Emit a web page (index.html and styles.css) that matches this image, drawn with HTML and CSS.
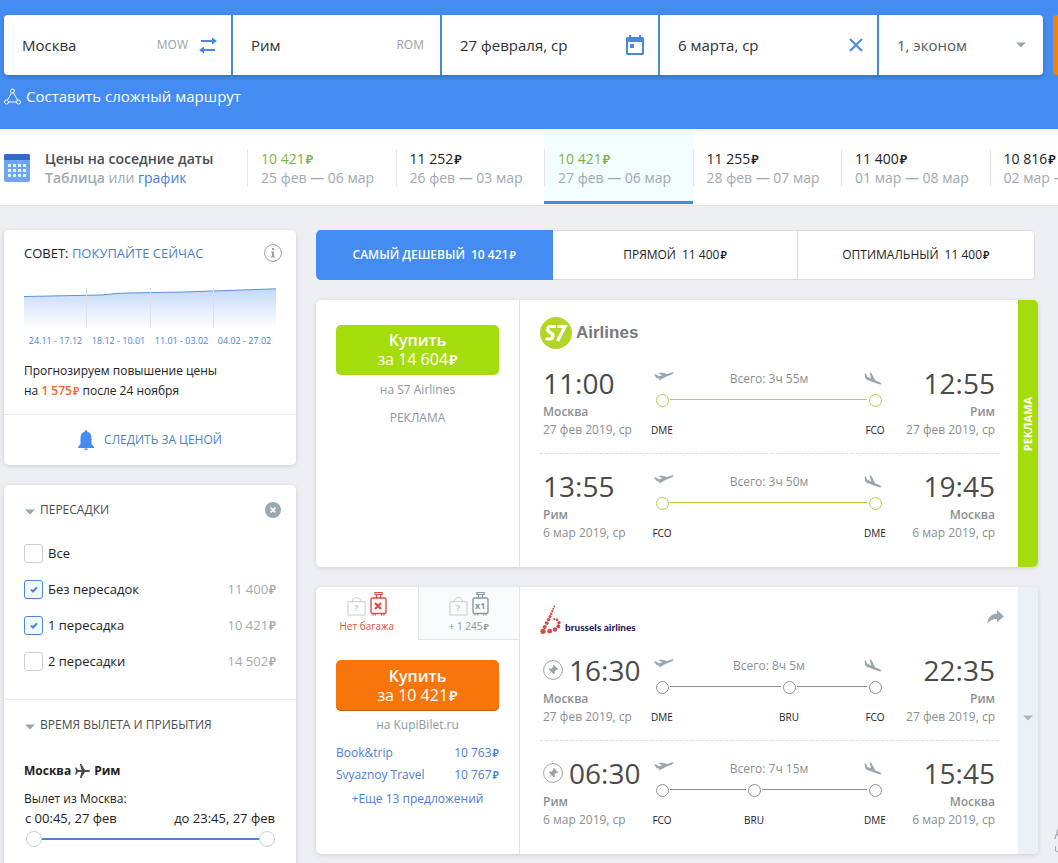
FILE: index.html
```html
<!DOCTYPE html>
<html lang="ru">
<head>
<meta charset="utf-8">
<title>Москва — Рим: авиабилеты</title>
<meta name="viewport" content="width=device-width, initial-scale=1">
<link rel="stylesheet" href="styles.css">
</head>
<body>
<svg class="sprite" aria-hidden="true">
  <symbol id="takeoff" viewBox="0 0 20 12"><path d="M0 4.500 2 4.300 4.600 6.200 8.400 5.300 4.500 3.300 7 2.600 13.500 4.100 17.300 2.600C19.200 2 20 2.600 19.300 3.400 18.500 4.300 14 5.800 12.500 6.500L6.500 9.700 4.300 9.900 5.500 8.400 2.800 8.200z"/></symbol>
  <symbol id="landing" viewBox="0 0 18 14"><path d="M.6 1.200 2 1.700 3.200 4.800 7.200 6.600 5.400.2 7.400 1 11.200 8.200 15.600 10.200c1.300.7 1.900 1.400 1.600 1.900-.4.500-1.500.4-2.800 0L4 8.200C2.400 7.600 1.500 7 1.200 5.800z"/></symbol>
  <symbol id="caret" viewBox="0 0 10 6"><path d="M0 .5h10L5 5.500z"/></symbol>
  <symbol id="bag" viewBox="0 0 20 20"><path d="M1 5.500h18v14H1zM5.500 5.500c0-6 9-6 9 0" fill="none" stroke="currentColor"/></symbol>
  <symbol id="suitcase" viewBox="0 0 17 24"><path d="M5 .5h7v2H5zM6.500 2.500v4M10.500 2.500v4M3 21v2.500M5.500 21v2.500M11.500 21v2.500M14 21v2.500" fill="none" stroke="currentColor" stroke-width="1.200"/><rect x="1" y="6" width="15" height="15.500" rx="1.500" fill="none" stroke="currentColor" stroke-width="1.400"/></symbol>
  <symbol id="pin" viewBox="0 0 20 20"><circle cx="10" cy="10" r="9.400" fill="none" stroke="currentColor"/><path d="M10.700 4.800 15.200 9.300 14.300 9.900 13.500 9.600 11.700 11.400 11.600 13.700 10.700 14.200 8.500 12 5 14.900 8 11.500 5.900 9.300 6.400 8.400 8.700 8.400 10.500 6.500 10.100 5.600z"/></symbol>
</svg>

<header class="top">
  <form class="search" onsubmit="return false">
    <div class="fields">
      <label class="field"><input class="field-input" aria-label="Откуда" value="Москва"><span class="code">MOW</span>
        <svg class="swap" viewBox="0 0 18 18"><path d="M2 5h12M4 14h12" stroke="currentColor" stroke-width="2" fill="none"/><path d="M13 1.500 18 5l-5 3.500zM5 10.500 0 14l5 3.500z" fill="currentColor"/></svg></label>
      <label class="field"><input class="field-input" aria-label="Куда" value="Рим"><span class="code">ROM</span></label>
      <label class="field field-date"><input class="field-input" aria-label="Туда" value="27 февраля, ср">
        <svg class="calendar" viewBox="0 0 18 20"><path d="M3 0h2v2h8V0h2v2h1.500Q18 2 18 3.500v15q0 1.500-1.500 1.500h-15Q0 20 0 18.500v-15Q0 2 1.500 2H3zM2 7v11h14V7zM4 9h4v4H4z" fill-rule="evenodd"/></svg></label>
      <label class="field"><input class="field-input" aria-label="Обратно" value="6 марта, ср">
        <svg class="clear" viewBox="0 0 14 14"><path d="M1 1l12 12M13 1 1 13" stroke="currentColor" stroke-width="2"/></svg></label>
      <label class="field"><select class="field-input field-select" aria-label="Пассажиры и класс"><option>1, эконом</option></select>
        <svg class="caret"><use href="#caret"/></svg></label>
    </div>
    <button class="submit" type="submit" aria-label="Найти"></button>
  </form>
  <a class="complex" href="#"><svg class="route" viewBox="0 0 17 17"><g fill="none" stroke="currentColor"><circle cx="8.500" cy="3" r="2"/><circle cx="2.500" cy="14" r="2"/><circle cx="14.500" cy="14" r="2"/><path d="M7.500 5 3.500 12M9.500 5l4 7M4.500 14h8"/></g></svg>Составить сложный маршрут</a>
</header>

<section class="dates">
  <div class="dates-intro">
    <svg class="grid-icon" viewBox="0 0 26 28"><rect width="26" height="28" rx="2" fill="#6fa6f3"/><path d="M0 6V2q0-2 2-2h22q2 0 2 2v4z" fill="#3269cf"/><path d="M4 11.500h18M4 16.500h18M4 21.500h18" stroke="#e6f5ff" stroke-width="3" stroke-dasharray="3 2"/></svg>
    <div><h2 class="dates-title">Цены на соседние даты</h2><p class="dates-sub"><b>Таблица</b> или <a href="#">график</a></p></div>
  </div>
  <div class="dates-list">
    <a class="date" href="#"><span class="price green">10 421<i>₽</i></span><span>25 фев — 06 мар</span></a>
    <a class="date" href="#"><span class="price">11 252<i>₽</i></span><span>26 фев — 03 мар</span></a>
    <a class="date active" href="#"><span class="price green">10 421<i>₽</i></span><span>27 фев — 06 мар</span></a>
    <a class="date" href="#"><span class="price">11 255<i>₽</i></span><span>28 фев — 07 мар</span></a>
    <a class="date" href="#"><span class="price">11 400<i>₽</i></span><span>01 мар — 08 мар</span></a>
    <a class="date" href="#"><span class="price">10 816<i>₽</i></span><span>02 мар — 09 мар</span></a>
  </div>
</section>

<div class="page">
  <aside class="sidebar">
    <section class="card">
      <div class="advice">
        <div class="advice-head"><h3>СОВЕТ: <a href="#">ПОКУПАЙТЕ СЕЙЧАС</a></h3>
          <svg class="info" viewBox="0 0 18 18"><circle cx="9" cy="9" r="8.400" fill="none" stroke="currentColor"/><path d="M8 4h2v2H8zM7 7.500h3V13H8V8.500H7zM7 12.500h4v1H7z"/></svg></div>
        <svg class="chart" viewBox="0 0 252 40" preserveAspectRatio="none"><defs><linearGradient id="fade" x1="0" y1="0" x2="0" y2="1"><stop offset="0" stop-color="#c3d9f8"/><stop offset="1" stop-color="#fff"/></linearGradient></defs><path d="M0 8.500 78 7 Q92 5 105 5L160 4 252 .8V40H0z" fill="url(#fade)"/><path d="M0 8.500 78 7Q92 5 105 5L160 4 252 .8" fill="none" stroke="#5a93dc"/><path d="M62.500 0v40M126.500 0v40M189.500 0v40" stroke="#dcdfe3"/></svg>
        <div class="periods"><span>24.11 - 17.12</span><span>18.12 - 10.01</span><span>11.01 - 03.02</span><span>04.02 - 27.02</span></div>
        <p class="forecast">Прогнозируем повышение цены<br>на <span class="rise">1 575<i>₽</i></span> после 24 ноября</p>
      </div>
      <button class="follow"><svg class="bell" viewBox="0 0 16 20"><path d="M8 0q1.200 0 1.200 1.600Q13.500 3 13.500 8v6L16 17v1H0v-1l2.500-3V8q0-5 4.300-6.400Q6.800 0 8 0zM6 18.500h4q-.5 1.500-2 1.500t-2-1.500z"/></svg>СЛЕДИТЬ ЗА ЦЕНОЙ</button>
    </section>

    <section class="card filters">
      <div class="filter">
        <div class="filter-head"><svg class="caret"><use href="#caret"/></svg><h3>ПЕРЕСАДКИ</h3><button class="reset" aria-label="Сбросить"><svg viewBox="0 0 6 6"><path d="M.5.5l5 5M5.500.5l-5 5" stroke="#fff" stroke-width="1.600"/></svg></button></div>
        <label class="check"><input type="checkbox"><span>Все</span></label>
        <label class="check"><input type="checkbox" checked><span>Без пересадок</span><span class="check-price">11 400<i>₽</i></span></label>
        <label class="check"><input type="checkbox" checked><span>1 пересадка</span><span class="check-price">10 421<i>₽</i></span></label>
        <label class="check"><input type="checkbox"><span>2 пересадки</span><span class="check-price">14 502<i>₽</i></span></label>
      </div>
      <div class="filter filter-time">
        <div class="filter-head"><svg class="caret"><use href="#caret"/></svg><h3>ВРЕМЯ ВЫЛЕТА И ПРИБЫТИЯ</h3></div>
        <p class="direction">Москва <svg class="plane" viewBox="0 0 15 14"><path d="M0 3.500h1.200L3 6h3.500L4.800 0h1.500L10 6h3.500q1.500.2 1.500 1t-1.500 1H10l-3.700 6H4.800L6.500 8H3L1.200 10.500H0L1 7z"/></svg> Рим</p>
        <p class="depart">Вылет из Москва:</p>
        <p class="range-text"><span>с 00:45, 27 фев</span><span>до 23:45, 27 фев</span></p>
        <div class="range"><input type="range" aria-label="Вылет не раньше" value="0"><input type="range" aria-label="Вылет не позже" value="100"></div>
      </div>
    </section>
  </aside>

  <main class="results">
    <nav class="sorts">
      <button class="sort sort-active">САМЫЙ ДЕШЕВЫЙ<span>10 421<i>₽</i></span></button>
      <button class="sort">ПРЯМОЙ<span>11 400<i>₽</i></span></button>
      <button class="sort">ОПТИМАЛЬНЫЙ<span>11 400<i>₽</i></span></button>
    </nav>

    <article class="card ticket ad">
      <div class="offer">
        <div class="offer-body">
          <button class="buy"><b>Купить</b><span>за 14 604<i>₽</i></span></button>
          <p class="seller">на S7 Airlines</p>
          <p class="seller ad-note">РЕКЛАМА</p>
        </div>
      </div>
      <div class="flights">
        <div class="carrier"><svg class="s7" viewBox="0 0 32 32"><circle cx="16" cy="16" r="16" fill="#b1d629"/><path d="M16 9.500H10.500Q7.500 9.500 7.800 12.500 8 14.500 11 16 14 17.500 12.500 20.500 11.800 22 9 22H5.500M17.500 9.500H25L17.500 24" fill="none" stroke="#fff" stroke-width="3.200"/></svg><span class="s7-name">Airlines</span></div>
        <div class="segment">
          <div class="point"><div class="time">11:00</div><b>Москва</b><span>27 фев 2019, ср</span></div>
          <div class="way"><div class="way-top"><svg class="takeoff"><use href="#takeoff"/></svg><span>Всего: 3ч 55м</span><svg class="landing"><use href="#landing"/></svg></div>
            <div class="track"><span class="stop">DME</span><span class="leg"></span><span class="stop">FCO</span></div></div>
          <div class="point arrival"><div class="time">12:55</div><b>Рим</b><span>27 фев 2019, ср</span></div>
        </div>
        <div class="segment">
          <div class="point"><div class="time">13:55</div><b>Рим</b><span>6 мар 2019, ср</span></div>
          <div class="way"><div class="way-top"><svg class="takeoff"><use href="#takeoff"/></svg><span>Всего: 3ч 50м</span><svg class="landing"><use href="#landing"/></svg></div>
            <div class="track"><span class="stop">FCO</span><span class="leg"></span><span class="stop">DME</span></div></div>
          <div class="point arrival"><div class="time">19:45</div><b>Москва</b><span>6 мар 2019, ср</span></div>
        </div>
      </div>
      <div class="edge"><span>РЕКЛАМА</span></div>
    </article>

    <article class="card ticket">
      <div class="offer">
        <div class="bags">
          <button class="bag-tab no-bag"><span class="bag-icons"><span class="bag"><svg><use href="#bag"/></svg><em>?</em></span><span class="suitcase"><svg><use href="#suitcase"/></svg><em><svg class="cross" viewBox="0 0 8 8"><path d="M1 1l6 6M7 1 1 7" stroke="currentColor" stroke-width="2.400"/></svg></em></span></span>Нет багажа</button>
          <button class="bag-tab with-bag"><span class="bag-icons"><span class="bag"><svg><use href="#bag"/></svg><em>?</em></span><span class="suitcase"><svg><use href="#suitcase"/></svg><em>x1</em></span></span><span>+ 1 245<i>₽</i></span></button>
        </div>
        <div class="offer-body">
          <button class="buy"><b>Купить</b><span>за 10 421<i>₽</i></span></button>
          <p class="seller">на KupiBilet.ru</p>
          <a class="agent" href="#"><span>Book&amp;trip</span><span class="agent-price">10 763<i>₽</i></span></a>
          <a class="agent" href="#"><span>Svyaznoy Travel</span><span class="agent-price">10 767<i>₽</i></span></a>
          <a class="more" href="#">+Еще 13 предложений</a>
        </div>
      </div>
      <div class="flights">
        <div class="carrier"><svg class="sn" viewBox="0 0 21 29"><g fill="#d9494b"><circle cx="14.300" cy="1.500" r=".9"/><circle cx="13.300" cy="3.800" r="1"/><circle cx="12.300" cy="6.200" r="1.100"/><circle cx="11.200" cy="8.700" r="1.300"/><circle cx="10" cy="11.500" r="1.500"/><circle cx="8.600" cy="14.600" r="1.700"/><circle cx="6.800" cy="18.100" r="1.900"/><circle cx="4.700" cy="22" r="2.100"/><circle cx="3" cy="26.300" r="2.600"/><circle cx="9.700" cy="26.200" r="2.400"/><circle cx="15" cy="24.500" r="2.200"/><circle cx="18.300" cy="21.200" r="2"/><circle cx="19" cy="17.600" r="1.700"/><circle cx="17" cy="14.800" r="1.400"/><circle cx="14.300" cy="14" r="1.100"/></g></svg><span class="sn-name">brussels airlines</span>
          <button class="share" aria-label="Поделиться"><svg viewBox="0 0 17 14"><path d="M10 0l7 6.500L10 12V9Q4 8.500 0 14 1 4.500 10 3.500z"/></svg></button></div>
        <div class="segment">
          <div class="point"><div class="time"><svg class="pin"><use href="#pin"/></svg>16:30</div><b>Москва</b><span>27 фев 2019, ср</span></div>
          <div class="way"><div class="way-top"><svg class="takeoff"><use href="#takeoff"/></svg><span>Всего: 8ч 5м</span><svg class="landing"><use href="#landing"/></svg></div>
            <div class="track"><span class="stop">DME</span><span class="leg" style="flex-grow:111"></span><span class="stop">BRU</span><span class="leg" style="flex-grow:70"></span><span class="stop">FCO</span></div></div>
          <div class="point arrival"><div class="time">22:35</div><b>Рим</b><span>27 фев 2019, ср</span></div>
        </div>
        <div class="segment">
          <div class="point"><div class="time"><svg class="pin"><use href="#pin"/></svg>06:30</div><b>Рим</b><span>6 мар 2019, ср</span></div>
          <div class="way"><div class="way-top"><svg class="takeoff"><use href="#takeoff"/></svg><span>Всего: 7ч 15м</span><svg class="landing"><use href="#landing"/></svg></div>
            <div class="track"><span class="stop">FCO</span><span class="leg" style="flex-grow:76"></span><span class="stop">BRU</span><span class="leg" style="flex-grow:105"></span><span class="stop">DME</span></div></div>
          <div class="point arrival"><div class="time">15:45</div><b>Москва</b><span>6 мар 2019, ср</span></div>
        </div>
      </div>
      <button class="edge" aria-label="Подробнее"><svg class="caret"><use href="#caret"/></svg></button>
    </article>
  </main>
</div>
<div class="notice"><p class="notice-title">Активация Windows</p><p>Чтобы активировать Windows</p></div>
</body>
</html>
```
FILE: styles.css
```css
* { box-sizing: border-box; }
html, body { height: 100%; }
body {
  margin: 0;
  overflow: hidden;
  background: #eeeff3;
  color: #222;
  font: 12px/18px "Open Sans", "Noto Sans", sans-serif;
}
h2, h3, p { margin: 0; font-size: inherit; font-weight: 400; }
a { color: #4a7fd4; text-decoration: none; }
button { margin: 0; padding: 0; border: 0; background: none; color: inherit; font: inherit; cursor: pointer; }
i { font-style: normal; font-weight: 600; font-size: 90%; line-height: 1; margin-left: 1px; }
svg { display: block; flex: none; fill: currentColor; }
.sprite { position: absolute; width: 0; height: 0; }
.caret { width: 10px; height: 6px; color: #9aa7ae; }

/* search */
.top { height: 129px; padding: 15px 0 0 4px; background: #448cf1; overflow: hidden; }
.search { display: flex; gap: 10px; }
.fields {
  flex: 1;
  display: grid;
  grid-template-columns: 227fr 207fr 216fr 217fr 164fr;
  gap: 2px;
  height: 60px;
  border-radius: 4px;
  overflow: hidden;
  background: #4a88d8;
  box-shadow: 0 2px 4px rgba(0, 0, 0, .2);
}
.field { display: flex; align-items: center; min-width: 0; padding: 0 14px 0 18px; background: #fff; color: #4a88e0; }
.field-input {
  flex: 1;
  width: 0;
  padding: 0;
  border: 0;
  outline: 0;
  background: none;
  color: #2f3133;
  font: 15px/20px "Open Sans", "Noto Sans", sans-serif;
}
.field-select { appearance: none; color: #555b60; }
.code { color: #98a2a9; margin-right: 2px; line-height: 20px; }
.swap { width: 18px; height: 18px; margin-left: 9px; }
.calendar { width: 18px; height: 20px; }
.clear { width: 14px; height: 14px; }
.field .caret { margin-right: 3px; }
.submit { width: 160px; height: 60px; margin-right: -155px; border-radius: 4px; background: #f08409; }
.complex { display: inline-flex; align-items: center; gap: 5px; margin-top: 11px; color: #fff; font-size: 15px; line-height: 20px; }
.route { width: 17px; height: 17px; }

/* neighbouring dates */
.dates { display: flex; height: 77px; background: #fff; border-bottom: 1px solid #dfe1e4; overflow: hidden; font-size: 14px; line-height: 19px; color: #a1a9b0; }
.dates-intro { display: flex; align-items: flex-start; gap: 15px; width: 247px; padding: 20px 0 0 4px; flex: none; }
.grid-icon { width: 26px; height: 28px; margin-top: 5px; }
.dates-title { color: #4a4c4f; font-weight: 600; }
.dates-sub b { font-weight: 600; }
.dates-list { flex: 1; display: grid; grid-template-columns: repeat(6, 1fr); margin-right: -80px; }
.date {
  display: flex;
  flex-direction: column;
  height: 75px;
  padding: 20px 0 0 14px;
  color: #a1a9b0;
  white-space: nowrap;
  background: linear-gradient(#e4e7e9, #e4e7e9) 0 20px / 1px 37px no-repeat;
}
.date span { height: 19px; }
.price { color: #222; }
.green { color: #7cb342; }
.active { background-color: #f2fdff; border-bottom: 3px solid #4a88e0; }

/* layout */
.page { display: flex; align-items: flex-start; gap: 20px; padding: 24px 20px 0 4px; }
.sidebar { width: 292px; flex: none; }
.results { flex: 1; min-width: 0; }
.card { background: #fff; border-radius: 5px; box-shadow: 0 1px 4px rgba(0, 0, 0, .14); margin-bottom: 20px; }

/* advice */
.advice { padding: 14px 20px 13px; border-bottom: 1px solid #e6e8ea; }
.advice-head { display: flex; align-items: center; justify-content: space-between; margin-right: -6px; font-size: 13px; }
.advice-head a { font-weight: 500; }
.info { width: 18px; height: 18px; color: #98a1a6; }
.chart { width: 100%; height: 40px; margin-top: 26px; }
.periods { display: grid; grid-template-columns: repeat(4, 1fr); margin-bottom: 7px; font-size: 9px; line-height: 26px; color: #4a7fd4; text-align: center; white-space: nowrap; }
.forecast { line-height: 20px; }
.rise { color: #f0672e; font-weight: 600; }
.follow { display: flex; align-items: center; justify-content: center; gap: 10px; width: 100%; height: 50px; color: #4a7fd4; font-weight: 500; }
.bell { width: 16px; height: 20px; color: #448cf1; }

/* filters */
.filter { padding: 16px 20px 20px; border-bottom: 1px solid #e6e8ea; color: #222; }
.filter-time { padding-bottom: 60px; }
.filter-head { display: flex; align-items: center; gap: 5px; height: 18px; margin: 0 -6px 16px 1px; color: #4a4c4f; }
.filter-head .caret { margin-top: 3px; }
.reset { display: flex; align-items: center; justify-content: center; width: 16px; height: 16px; margin-left: auto; margin-right: 1px; border-radius: 50%; background: #9ba8af; }
.reset svg { width: 6px; height: 6px; }
.check { display: flex; align-items: center; height: 36px; font-size: 13px; }
.check input {
  appearance: none;
  width: 19px;
  height: 19px;
  margin: 0 5px 0 0;
  border: 1px solid #cbcfd2;
  border-radius: 3px;
  background: #fff;
}
.check input:checked {
  border-color: #4a88e0;
  background: #f2fbff url("data:image/svg+xml,%3Csvg xmlns='http://www.w3.org/2000/svg' viewBox='0 0 8 7'%3E%3Cpath d='M1 3.500 3 5.500 7 1.200' fill='none' stroke='%234a84dc' stroke-width='2'/%3E%3C/svg%3E") center / 8px 7px no-repeat;
}
.check-price { margin-left: auto; color: #a3a9ae; }
.direction { display: flex; align-items: center; gap: 4px; margin-top: 28px; font-weight: 700; }
.plane { width: 15px; height: 14px; color: #4a4c4f; }
.depart { margin-top: 10px; }
.range-text { display: flex; justify-content: space-between; padding: 0 1px; line-height: 20px; font-size: 13px; }
.range { position: relative; height: 16px; margin: 3px 1px 0 2px; background: linear-gradient(#4a84dc, #4a84dc) 0 7px / 100% 2px no-repeat; }
.range input { position: absolute; inset: 0; width: 100%; height: 16px; margin: 0; appearance: none; background: none; pointer-events: none; }
.range input::-webkit-slider-thumb { appearance: none; width: 16px; height: 16px; border: 1px solid #cbcfd2; border-radius: 50%; background: #fff; pointer-events: auto; }

/* sorting */
.sorts { display: grid; grid-template-columns: 237fr 244fr 237fr; height: 50px; margin: 0 3px 20px 0; border-radius: 5px; overflow: hidden; }
.sort { display: flex; align-items: center; justify-content: center; gap: 6px; border: 1px solid #d9dcdf; border-left: 0; background: #fff; font-weight: 500; }
.sort:last-child { border-radius: 0 5px 5px 0; }
.sort-active { border-color: #448cf1; background: #448cf1; color: #fff; font-weight: 600; }

/* tickets */
.ticket { display: flex; min-height: 267px; overflow: hidden; }
.offer { width: 204px; flex: none; border-right: 1px solid #e1e4e6; }
.offer-body { padding: 20px; text-align: center; }
.buy { display: block; width: 100%; height: 51px; border-radius: 5px; background: #f8750c; box-shadow: inset 0 -1px #c75c07; color: #fff; font-size: 16px; line-height: 19px; }
.buy b { display: block; font-weight: 600; }
.ad .buy { height: 50px; background: #a5dc0c; box-shadow: none; }
.ad .offer-body { padding-top: 25px; }
.seller { margin-top: 5px; color: #8f979c; }
.ad .seller { margin-top: 6px; }
.ad .ad-note { margin-top: 10px; }
.agent { display: flex; justify-content: space-between; height: 22px; line-height: 22px; }
.seller + .agent { margin-top: 8px; }
.agent-price, .more { font-weight: 500; }
.more { display: block; margin-top: 4px; }

.bags { display: grid; grid-template-columns: 1fr 1fr; height: 53px; }
.bag-tab { display: flex; flex-direction: column; align-items: center; padding-top: 5px; font-size: 10px; line-height: 20px; }
.no-bag { color: #dc4f43; }
.with-bag { border: solid #e1e4e6; border-width: 0 0 1px 1px; background: #f8fafc; color: #8b969d; }
.bag-icons { display: flex; align-items: flex-end; gap: 4px; height: 24px; }
.bag, .suitcase { display: grid; place-items: center; }
.bag > *, .suitcase > * { grid-area: 1 / 1; }
.bag svg { width: 19px; height: 20px; }
.suitcase > svg { width: 17px; height: 24px; }
.bag { color: #c3cace; }
.with-bag .suitcase { color: #849ba6; }
.bag em, .suitcase em { padding-top: 4px; font-style: normal; font-weight: 700; font-size: 9px; line-height: 12px; }
.cross { width: 8px; height: 8px; }

.flights { flex: 1; min-width: 0; padding: 16px 19px 0 20px; }
.carrier { display: flex; align-items: center; gap: 4px; height: 38px; padding-bottom: 5px; }
.s7 { width: 32px; height: 32px; }
.s7-name { color: #77797b; font: 700 17px/20px "Liberation Sans", Arial, sans-serif; }
.sn { width: 21px; height: 29px; }
.sn-name { margin-top: 14px; color: #2b2458; font: 900 10px/14px Lato, sans-serif; }
.share { margin-left: auto; margin-right: -5px; margin-bottom: 6px; color: #9ba8af; }
.share svg { width: 17px; height: 14px; }

.segment { display: flex; padding: 12px 4px 14px 3px; }
.segment + .segment { padding-top: 15px; border-top: 1px dashed #dadddf; }
.point { display: flex; flex-direction: column; width: 100px; color: #8b8f92; white-space: nowrap; }
.point b { font-weight: 600; }
.arrival { align-items: flex-end; }
.time { display: flex; align-items: center; gap: 6px; height: 34px; margin-bottom: 3px; color: #4a4a4a; font-size: 28px; }
.pin { width: 20px; height: 20px; color: #98a2a9; }
.way { flex: 1; margin: 0 14px 0 13px; }
.way-top { display: flex; justify-content: space-between; height: 28px; padding-top: 4px; margin: 0 -1px 0 -2px; color: #8b8f92; }
.takeoff { width: 20px; height: 12px; color: #9ba5ac; }
.landing { width: 18px; height: 14px; margin-top: 2px; color: #9ba5ac; }
.track { display: flex; align-items: flex-start; color: #8b8f92; }
.stop { display: flex; flex-direction: column; align-items: center; gap: 14px; width: 12px; color: #222; font-size: 10px; line-height: 18px; white-space: nowrap; }
.stop::before { content: ""; width: 11px; height: 11px; border: 1px solid #8b8f92; border-radius: 50%; flex: none; }
.leg { flex: 1 1 0; height: 1px; margin: 5px 2px 0; background: #8b8f92; }
.ad .stop::before { border-color: #b1cf3f; }
.ad .leg { background: #b1cf3f; }
.edge { display: flex; align-items: center; justify-content: center; width: 20px; flex: none; background: #eaf2f6; }
.edge .caret { color: #a9b8bf; margin-bottom: 6px; }
.ad .edge { padding-bottom: 18px; background: #a5dc0c; color: #fff; font-size: 11px; font-weight: 700; }
.ad .edge span { writing-mode: vertical-rl; transform: rotate(180deg); }

.notice { position: fixed; left: 100%; bottom: 4px; margin-left: -4px; color: #a5a7ab; line-height: 16px; white-space: nowrap; pointer-events: none; }
.notice-title { font-size: 16px; line-height: 20px; }
```
